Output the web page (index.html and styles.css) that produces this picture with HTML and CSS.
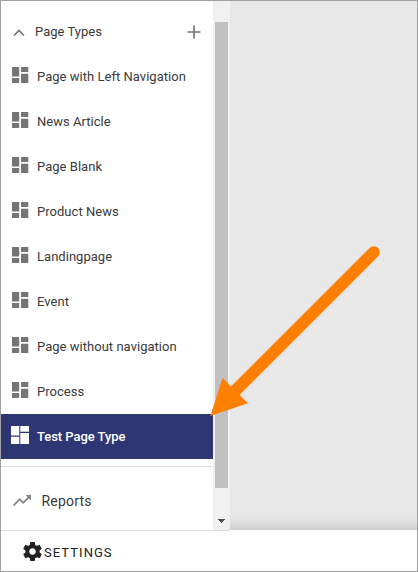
FILE: index.html
```html
<!DOCTYPE html>
<html lang="en">
<head>
<meta charset="utf-8">
<title>Page Types</title>
<link rel="stylesheet" href="styles.css">
</head>
<body>
<svg class="defs" width="0" height="0">
  <symbol id="dash" viewBox="0 0 17 16"><path d="M0 0h7.2v9.6H0zM9 0h7.3v4.9H9zM0 11h7.2v5H0zM9 6.8h7.3V16H9z"/></symbol>
</svg>
<div class="window">
  <div class="main">
    <nav class="sidebar">
      <div class="header">
        <svg class="chevron" viewBox="0 0 12 8"><path d="M1 6.500l5-5 5 5"/></svg>
        <span>Page Types</span>
        <svg class="plus" viewBox="0 0 14 14"><path d="M7 .5v13M.5 7h13"/></svg>
      </div>
      <div class="item"><svg><use href="#dash"/></svg><span>Page with Left Navigation</span></div>
      <div class="item"><svg><use href="#dash"/></svg><span>News Article</span></div>
      <div class="item"><svg><use href="#dash"/></svg><span>Page Blank</span></div>
      <div class="item"><svg><use href="#dash"/></svg><span>Product News</span></div>
      <div class="item"><svg><use href="#dash"/></svg><span>Landingpage</span></div>
      <div class="item"><svg><use href="#dash"/></svg><span>Event</span></div>
      <div class="item"><svg><use href="#dash"/></svg><span>Page without navigation</span></div>
      <div class="item"><svg><use href="#dash"/></svg><span>Process</span></div>
      <div class="item selected"><svg viewBox="0 0 18 18"><path d="M0 0h8.3v9.6H0zM9.3 0H18v5.700H9.3zM0 10.700h8.3V18H0zM9.3 6.9H18V18H9.3z"/></svg><span>Test Page Type</span></div>
      <div class="reports">
        <svg viewBox="2 6 20 12"><path d="M16 6l2.29 2.29-4.88 4.88-4-4L2 16.59 3.41 18l6-6 4 4 6.3-6.29L22 12V6z"/></svg>
        <span>Reports</span>
      </div>
    </nav>
    <div class="scrollbar">
      <div class="thumb"></div>
      <svg class="down" viewBox="0 0 7 4" shape-rendering="crispEdges"><path d="M0 0h7v1H0zM1 1h5v1H1zM2 2h3v1H2zM3 3h1v1H3z"/></svg>
    </div>
    <div class="canvas"></div>
  </div>
  <footer class="footer">
    <svg viewBox="2 2 20 20"><path d="M19.43 12.98c.04-.32.07-.64.07-.98s-.03-.66-.07-.98l2.11-1.65c.19-.15.24-.42.12-.64l-2-3.46c-.12-.22-.39-.3-.61-.22l-2.49 1c-.52-.4-1.08-.73-1.69-.98l-.38-2.65C14.46 2.18 14.25 2 14 2h-4c-.25 0-.46.18-.49.42l-.38 2.65c-.61.25-1.17.59-1.69.98l-2.49-1c-.23-.09-.49 0-.61.22l-2 3.46c-.13.22-.07.49.12.64l2.11 1.65c-.04.32-.07.65-.07.98s.03.66.07.98l-2.11 1.65c-.19.15-.24.42-.12.64l2 3.46c.12.22.39.3.61.22l2.49-1c.52.4 1.08.73 1.69.98l.38 2.65c.03.24.24.42.49.42h4c.25 0 .46-.18.49-.42l.38-2.65c.61-.25 1.17-.59 1.69-.98l2.49 1c.23.09.49 0 .61-.22l2-3.46c.12-.22.07-.49-.12-.64l-2.11-1.65zM12 15.5c-1.93 0-3.5-1.57-3.5-3.5s1.57-3.5 3.5-3.5 3.5 1.57 3.5 3.5-1.57 3.5-3.5 3.5z"/></svg>
    <span>SETTINGS</span>
  </footer>
  <svg class="arrow" viewBox="0 0 172 172"><path class="shaft" d="M163.800 8.200L22 150"/><path d="M.4 172L12.500 134L38 159.300z"/></svg>
</div>
</body>
</html>
```
FILE: styles.css
```css
* { box-sizing: border-box; }
body { margin: 0; font-family: Roboto, "Liberation Sans", sans-serif; font-size: 13px; color: #3a3a3a; }
.defs { display: block; }
.window { position: relative; width: 418px; height: 572px; border: 1px solid #a0a0a0; background: #fff; display: flex; flex-direction: column; overflow: hidden; }
.main { display: flex; height: 529px; flex: none; }
.sidebar { width: 212px; padding-top: 8px; background: #fff; }
.header { display: flex; align-items: center; height: 45px; padding: 0 12px 0 12px; }
.header span { margin-left: 10px; }
.chevron { width: 12px; height: 8px; margin-top: 2px; fill: none; stroke: #757575; stroke-width: 1.6; }
.plus { width: 14px; height: 14px; margin-left: auto; fill: none; stroke: #757575; stroke-width: 1.7; }
.item { display: flex; align-items: center; height: 45px; padding-left: 11px; white-space: nowrap; }
.item svg { width: 17px; height: 16px; margin-right: 8px; margin-top: -3px; fill: #757575; }
.item span, .header span { letter-spacing: .03px; }
.item.selected { background: #2e3673; color: #fff; padding-left: 10px; }
.item.selected svg { width: 18px; height: 18px; fill: #fff; }
.item.selected span { font-weight: 500; letter-spacing: -.05px; }
.reports { display: flex; align-items: center; height: 68px; margin-top: 7px; padding-left: 12px; border-top: 1px solid #dcdcdc; font-size: 14px; letter-spacing: .2px; }
.reports svg { width: 18px; height: 11px; margin-right: 10.5px; fill: #858585; }
.scrollbar { display: flex; flex-direction: column; align-items: center; width: 17px; padding-top: 21px; background: #f0f0f0; }
.thumb { width: 13px; height: 466px; background: #c1c1c1; }
.down { width: 7px; height: 4px; margin-top: 31px; fill: #505050; }
.canvas { flex: 1; background: linear-gradient(to top, #cecece, #dadada 5px, #e3e3e3 10px, #e8e8e8 17px); }
.footer { display: flex; align-items: center; flex: 1; padding-left: 22px; color: #222; background: linear-gradient(#dcdcdc, #dcdcdc) 0 0 / 229px 1px no-repeat #fff; }
.footer svg { width: 19px; height: 19px; margin-top: 2px; fill: #212121; }
.footer span { margin: 3px 0 0 2px; font-size: 13px; letter-spacing: 1.05px; }
.arrow { position: absolute; left: 209px; top: 243px; width: 172px; height: 172px; overflow: visible; fill: #ff8000; }
.arrow .shaft { stroke: #ff8000; stroke-width: 12; stroke-linecap: round; }
```
